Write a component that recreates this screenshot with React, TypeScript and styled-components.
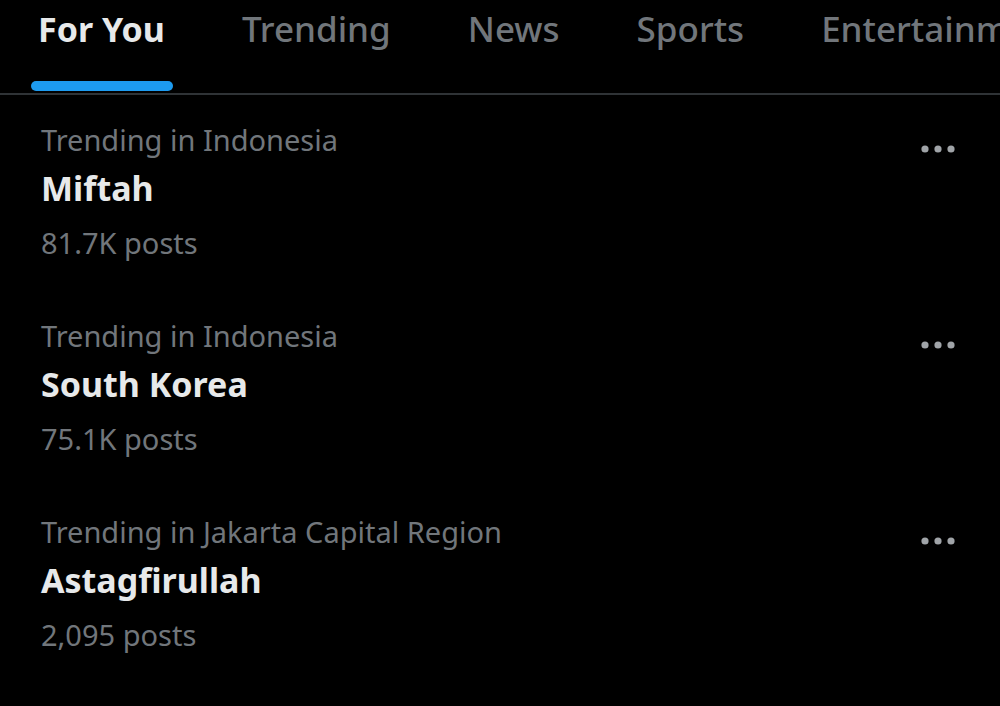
import React from "react";
import styled, { createGlobalStyle } from "styled-components";

const Global = createGlobalStyle`
  html, body { margin: 0; padding: 0; background: #000; }
  body { font-family: "Noto Sans", "Open Sans", sans-serif; overflow: hidden; }
`;

const Page = styled.div`
  width: 1000px;
  height: 706px;
  background: #000;
  overflow: hidden;
`;

const TabBar = styled.div`
  display: flex;
  gap: 77px;
  padding-left: 38px;
  height: 93px;
  border-bottom: 2px solid #2f3336;
  white-space: nowrap;
  overflow: hidden;
`;

const Tab = styled.div<{ $active?: boolean }>`
  position: relative;
  flex-shrink: 0;
  font-size: ${(p) => (p.$active ? 34 : 35)}px;
  font-weight: ${(p) => (p.$active ? 700 : 500)};
  color: ${(p) => (p.$active ? "#e7e9ea" : "#71767b")};
  padding-top: 6px;
  line-height: 46px;
`;

const Indicator = styled.div`
  position: absolute;
  left: -7px;
  right: -8px;
  top: 81px;
  height: 10px;
  border-radius: 5px;
  background: #1d9bf0;
`;

const List = styled.div`
  display: flex;
  flex-direction: column;
  padding-top: 21px;
`;

const Item = styled.div`
  display: flex;
  justify-content: space-between;
  align-items: flex-start;
  padding: 0 44px 0 41px;
  height: 196px;
`;

const Texts = styled.div`
  display: flex;
  flex-direction: column;
`;

const Meta = styled.div<{ $gap?: number }>`
  font-size: 29px;
  color: #71767b;
  line-height: 48px;
  margin-top: ${(p) => p.$gap ?? 0}px;
`;

const Title = styled.div`
  font-size: 34px;
  font-weight: 700;
  color: #e7e9ea;
  line-height: 48px;
`;

const Dots = styled.svg`
  margin-top: 28px;
`;

const items = [
  { meta: "Trending in Indonesia", title: "Miftah", posts: "81.7K posts" },
  { meta: "Trending in Indonesia", title: "South Korea", posts: "75.1K posts" },
  { meta: "Trending in Jakarta Capital Region", title: "Astagfirullah", posts: "2,095 posts" },
];

const tabs = ["For You", "Trending", "News", "Sports", "Entertainment"];

export default function App() {
  return (
    <Page>
      <Global />
      <TabBar>
        {tabs.map((t, i) => (
          <Tab key={t} $active={i === 0}>
            {t}
            {i === 0 && <Indicator />}
          </Tab>
        ))}
      </TabBar>
      <List>
        {items.map((it) => (
          <Item key={it.title}>
            <Texts>
              <Meta>{it.meta}</Meta>
              <Title>{it.title}</Title>
              <Meta $gap={7}>{it.posts}</Meta>
            </Texts>
            <Dots width="36" height="10" viewBox="0 0 36 10">
              <circle cx="5" cy="5" r="3.6" fill="#a0a4a8" />
              <circle cx="18" cy="5" r="3.6" fill="#a0a4a8" />
              <circle cx="31" cy="5" r="3.6" fill="#a0a4a8" />
            </Dots>
          </Item>
        ))}
      </List>
    </Page>
  );
}
